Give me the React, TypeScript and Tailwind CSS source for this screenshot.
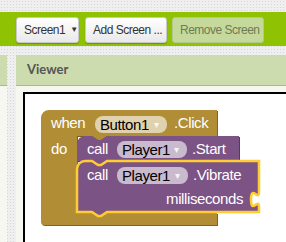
import React from "react";

const dotted =
  "bg-[#efefef] [background-image:radial-gradient(#d6d6d6_0.9px,transparent_0.9px)] [background-size:3px_3px]";

function Btn({ children, disabled, className = "" }: { children: React.ReactNode; disabled?: boolean; className?: string }) {
  return (
    <div
      className={
        "h-[26px] flex items-center rounded-[3px] border text-[12px] leading-none tracking-[-0.5px] " +
        (disabled
          ? "bg-[#c6d99c] border-[#b4c88b] text-[#6c7c52] "
          : "bg-gradient-to-b from-white to-[#e9e9e9] border-[#c9c9c9] text-[#333] shadow-[0_1px_1px_rgba(0,0,0,0.25)] ") +
        className
      }
      style={{ fontFamily: '"Liberation Sans", Arial, sans-serif' }}
    >
      {children}
    </div>
  );
}

const notch = "l6,4 h3 l6,-4";
const notchBack = "l-6,4 h-3 l-6,-4";

const goldPath = `M41,118 A8,8 0 0 1 49,110 H217 V136 H107 ${notchBack} H77 V213 H217 V225 H44 A3,3 0 0 1 41,222 Z`;
const startPath = `M77,144 A8,8 0 0 1 85,136 H92 ${notch} H239 V161 H107 ${notchBack} H77 Z`;
const vibPath = `M77,169 A8,8 0 0 1 85,161 H92 ${notch} H259 V187 v5 c0,10 -8,-8 -8,7.5 s8,-2.5 8,7.5 V212 H107 ${notchBack} H77 Z`;

const T = { fontSize: 15, letterSpacing: -0.4 } as const;

function Pill({ x, y, w, label }: { x: number; y: number; w: number; label: string }) {
  return (
    <g>
      <rect x={x} y={y} width={w} height={17} rx={8} fill="#ffffff" fillOpacity={0.6} />
      <text x={x + 5} y={y + 13.5} {...T} fill="#000">
        {label}
      </text>
      <text x={x + w - 13} y={y + 12} fontSize={10} fill="#ffffff" fillOpacity={0.85}>
        ▾
      </text>
    </g>
  );
}

export default function App() {
  return (
    <div className={"w-[286px] h-[242px] overflow-hidden flex flex-col " + dotted}>
      <div className="h-[12px] shrink-0" />
      <div className="h-[34px] shrink-0 bg-[#8fc202] flex items-center pl-[16px] pt-[1px]">
        <Btn className="w-[63px] pl-[7px]">
          Screen1<span className="ml-[5px] text-[8px]">▼</span>
        </Btn>
        <Btn className="w-[82px] ml-[6px] pl-[7px]">Add Screen ...</Btn>
        <Btn disabled className="w-[92px] ml-[5px] pl-[7px]">
          Remove Screen
        </Btn>
      </div>
      <div className="h-[9px] shrink-0" />
      <div className="flex flex-1 min-h-0">
        <div className="w-[7px] flex flex-col">
          <div className="h-[31px] bg-[#cddcaf] border-b border-[#a9b596]" />
          <div className="flex-1 bg-[#f7f7f2]" />
        </div>
        <div className="w-[9px]" />
        <div className="flex-1 flex flex-col min-w-0">
          <div
            className="h-[31px] shrink-0 bg-[#cddcaf] border-b border-[#a9b596] flex items-center pl-[11px] text-[13px] font-bold text-[#555]"
            style={{ fontFamily: "Lato, 'Open Sans', sans-serif" }}
          >
            Viewer
          </div>
          <div className="flex-1 bg-[#f7f7f2] pt-[6px] pl-[7px] min-h-0">
            <div className="relative h-full border-l-2 border-t-2 border-black bg-white overflow-hidden">
              <svg
                className="absolute left-0 top-0"
                width={261}
                height={148}
                viewBox="25 94 261 148"
                style={{ fontFamily: '"Liberation Sans", Arial, sans-serif' }}
              >
                <path d={goldPath} fill="#7d6322" transform="translate(1,1)" />
                <path d={goldPath} fill="#b18e35" />
                <text x={51} y={128} {...T} fill="#fff">when</text>
                <Pill x={95} y={116} w={72} label="Button1" />
                <text x={174} y={128} {...T} fill="#fff">.Click</text>
                <text x={51} y={154} {...T} fill="#fff">do</text>

                <path d={startPath} fill="#553a5c" transform="translate(1,1)" />
                <path d={startPath} fill="#7c5385" />
                <text x={87} y={154} {...T} fill="#fff">call</text>
                <Pill x={117} y={141} w={70} label="Player1" />
                <text x={192} y={154} {...T} fill="#fff">.Start</text>

                <path d={vibPath} fill="#7c5385" stroke="#fc3" strokeWidth={2.5} />
                <text x={87} y={180} {...T} fill="#fff">call</text>
                <Pill x={117} y={167} w={71} label="Player1" />
                <text x={193} y={180} {...T} fill="#fff">.Vibrate</text>
                <text x={243} y={204} {...T} fill="#fff" textAnchor="end">milliseconds</text>
              </svg>
            </div>
          </div>
        </div>
      </div>
    </div>
  );
}
